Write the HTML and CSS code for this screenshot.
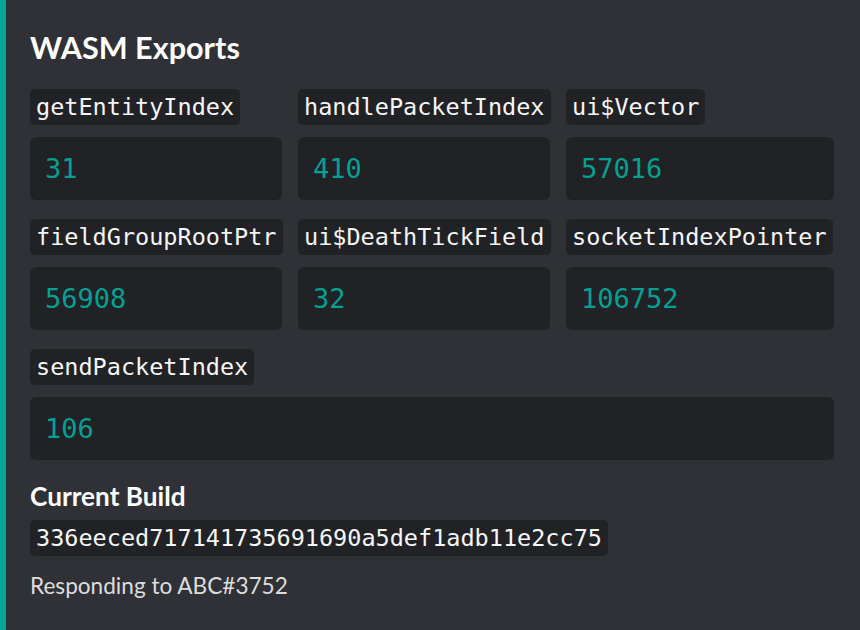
FILE: index.html
```html
<!DOCTYPE html>
<html>
<head>
<meta charset="utf-8">
<link rel="stylesheet" href="styles.css">
</head>
<body>
<div class="embed">
  <div class="title">WASM Exports</div>
  <div class="fields">
    <div class="field"><code class="label">getEntityIndex</code><pre class="value">31</pre></div>
    <div class="field"><code class="label">handlePacketIndex</code><pre class="value">410</pre></div>
    <div class="field"><code class="label">ui$Vector</code><pre class="value">57016</pre></div>
    <div class="field"><code class="label">fieldGroupRootPtr</code><pre class="value">56908</pre></div>
    <div class="field"><code class="label">ui$DeathTickField</code><pre class="value">32</pre></div>
    <div class="field"><code class="label">socketIndexPointer</code><pre class="value">106752</pre></div>
    <div class="field full"><code class="label">sendPacketIndex</code><pre class="value">106</pre></div>
  </div>
  <div class="subtitle">Current Build</div>
  <div class="hash-row"><code class="label">336eeced717141735691690a5def1adb11e2cc75</code></div>
  <div class="footer">Responding to ABC#3752</div>
</div>
</body>
</html>
```
FILE: styles.css
```css
html, body {
  margin: 0;
  padding: 0;
  background: #2f3136;
  width: 860px;
  height: 630px;
  overflow: hidden;
}
.embed {
  border-left: 6px solid #00a596;
  height: 630px;
  box-sizing: border-box;
  padding: 30px 26px 0 24px;
  display: flex;
  flex-direction: column;
  font-family: "Lato", "Noto Sans", sans-serif;
  color: #ffffff;
}
.title {
  font-size: 30.6px;
  font-weight: 700;
  line-height: 36px;
  margin-bottom: 23px;
}
.fields {
  display: grid;
  grid-template-columns: 252px 252px 268px;
  column-gap: 16px;
  row-gap: 19px;
}
.field {
  display: flex;
  flex-direction: column;
  align-items: flex-start;
}
.field.full {
  grid-column: 1 / -1;
}
.label {
  font-family: "DejaVu Sans Mono", monospace;
  font-size: 23.5px;
  line-height: 36px;
  height: 36px;
  padding: 0 6px;
  background: #202225;
  border-radius: 5px;
  color: #f6f6f7;
  white-space: pre;
}
.value {
  margin: 12px 0 0;
  align-self: stretch;
  font-family: "DejaVu Sans Mono", monospace;
  font-size: 27px;
  line-height: 63px;
  height: 63px;
  padding: 0 15px;
  background: #202225;
  border-radius: 6px;
  color: #03a194;
}
.subtitle {
  font-size: 26.2px;
  font-weight: 700;
  line-height: 30px;
  margin-top: 21px;
}
.hash-row {
  display: flex;
  margin-top: 9px;
}
.footer {
  margin-top: 17px;
  font-size: 22.6px;
  line-height: 26px;
  color: #dcddde;
}
```
